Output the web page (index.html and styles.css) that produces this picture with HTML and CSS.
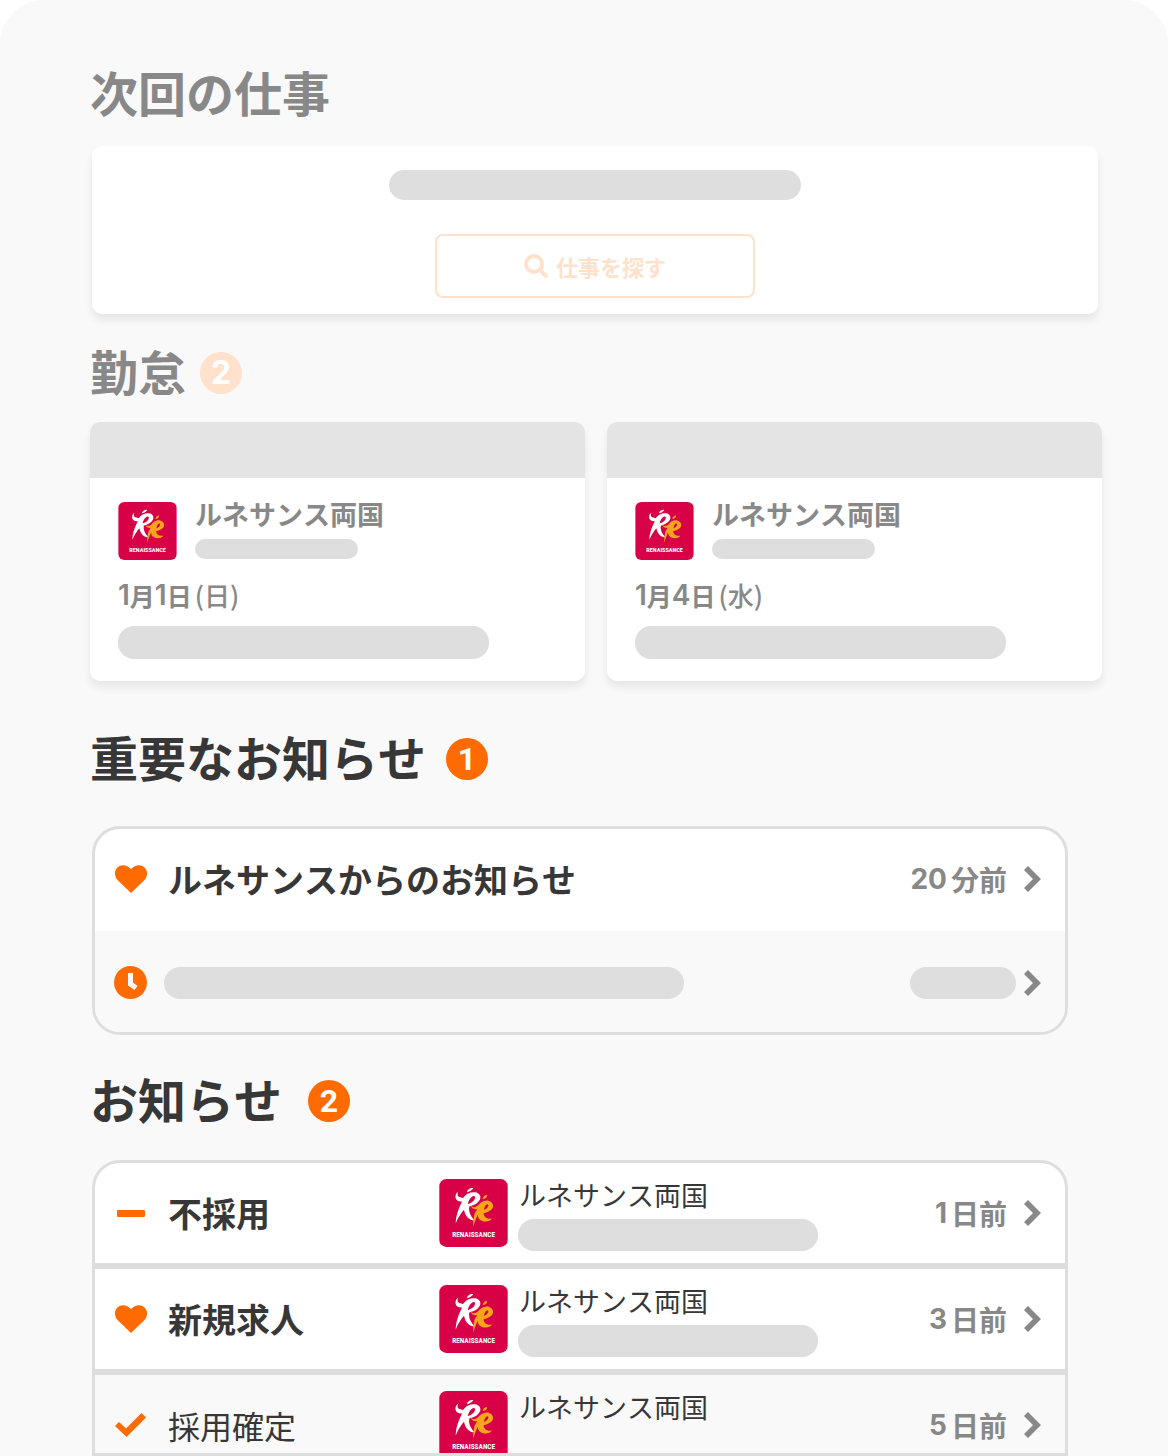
FILE: index.html
```html
<!DOCTYPE html>
<html lang="ja">
<head>
<meta charset="utf-8">
<meta name="viewport" content="width=device-width, initial-scale=1">
<title>次回の仕事</title>
<link rel="stylesheet" href="styles.css">
</head>
<body>
<svg class="sprite" aria-hidden="true">
  <symbol id="logo" viewBox="0 0 207 205">
    <rect width="207" height="205" rx="22" fill="#d80046"/>
    <path fill="#fff" d="M83 40C87 30 95 26 103 28C99 33 94 38 84 40Z"/>
    <path fill="#fff" d="M58 38C53 46 55 54 64 55L72 57C82 44 94 39 108 40C122 42 127 52 123 62C118 72 107 79 97 81L91 83C88 95 93 111 107 125C91 125 78 113 75 93C69 99 58 115 50 134C50 115 56 94 69 68C58 69 50 64 49 55C49 47 52 41 58 38ZM88 69L86 75C96 73 107 65 108 57C109 50 103 50 98 54C93 58 90 64 88 69Z"/>
    <path fill="#f8a51b" d="M131 60C132 53 138 48 145 48C144 56 139 60 131 60Z"/>
    <path fill="#f8a51b" d="M94 78C99 86 107 87 116 81C124 69 138 62 151 66C164 71 166 84 157 93C150 99 142 102 134 103C135 114 143 122 160 119C152 130 132 131 121 121C118 118 116 112 116 107C113 116 107 128 103 143C102 132 103 119 107 103C110 98 113 96 114 91C106 93 97 89 94 78ZM135 93C143 91 149 84 148 78C145 73 137 80 135 93Z"/>
  </symbol>
  <symbol id="heart" viewBox="0 0 32 28">
    <path d="M16 28L3 15.500C-1 11.500-1 5.500 2.500 2.500C6-1 12-.5 16 4C20-.5 26-1 29.500 2.500C33 5.500 33 11.500 29 15.500Z"/>
  </symbol>
  <symbol id="clock" viewBox="0 0 33 33">
    <path fill-rule="evenodd" d="M16.500 0A16.500 16.500 0 1 1 16.500 33A16.500 16.500 0 1 1 16.500 0ZM14 7V19.500L20.500 24L23.500 20L19 16.500V7Z"/>
  </symbol>
  <symbol id="minus" viewBox="0 0 28 7"><rect width="28" height="7" rx="1"/></symbol>
  <symbol id="check" viewBox="0 0 31 24">
    <path d="M0 13L4 9L11 15.500L26.500 0L31 4.500L11.500 24Z"/>
  </symbol>
  <symbol id="chevron" viewBox="0 0 17 26">
    <path d="M4 0L17 13L4 26L0 22L9 13L0 4Z"/>
  </symbol>
  <symbol id="search" viewBox="0 0 24 24">
    <path d="M16 16L22 22M10 2A8 8 0 1 1 10 18A8 8 0 1 1 10 2Z" fill="none" stroke="currentColor" stroke-width="4" stroke-linecap="round"/>
  </symbol>
</svg>

<main class="panel">
  <section>
    <h2 class="heading heading--muted">次回の仕事</h2>
    <div class="next-job">
      <div class="bar bar--message"></div>
      <button class="search-button" type="button"><svg width="24" height="24" aria-hidden="true"><use href="#search"/></svg>仕事を探す</button>
    </div>
  </section>

  <section class="section--attendance">
    <h2 class="heading heading--muted">勤怠<span class="badge badge--muted">2</span></h2>
    <div class="shifts">
      <article class="shift">
        <div class="shift__header"></div>
        <div class="shift__body">
          <div class="shift__place">
            <svg class="shift__logo" viewBox="0 0 207 205"><use href="#logo"/><text x="104" y="175" text-anchor="middle" class="logo-text">RENAISSANCE</text></svg>
            <div class="shift__label">
              <div class="shift__name">ルネサンス両国</div>
              <div class="bar bar--address"></div>
            </div>
          </div>
          <div class="date"><span class="date__digit">1</span><span>月</span><span class="date__digit">1</span><span>日</span><span class="date__weekday">(日)</span></div>
          <div class="bar bar--hours"></div>
        </div>
      </article>
      <article class="shift">
        <div class="shift__header"></div>
        <div class="shift__body">
          <div class="shift__place">
            <svg class="shift__logo" viewBox="0 0 207 205"><use href="#logo"/><text x="104" y="175" text-anchor="middle" class="logo-text">RENAISSANCE</text></svg>
            <div class="shift__label">
              <div class="shift__name">ルネサンス両国</div>
              <div class="bar bar--address"></div>
            </div>
          </div>
          <div class="date"><span class="date__digit">1</span><span>月</span><span class="date__digit">4</span><span>日</span><span class="date__weekday">(水)</span></div>
          <div class="bar bar--hours"></div>
        </div>
      </article>
    </div>
  </section>

  <section class="section--important">
    <h2 class="heading heading--important">重要なお知らせ<span class="badge">1</span></h2>
    <div class="list">
      <a class="row" href="#">
        <span class="row__icon"><svg width="32" height="28" aria-hidden="true"><use href="#heart"/></svg></span>
        <span class="row__title row__title--wide">ルネサンスからのお知らせ</span>
        <span class="time"><span class="time__digit">20</span>分前</span>
        <svg class="chevron" aria-hidden="true"><use href="#chevron"/></svg>
      </a>
      <a class="row row--read" href="#">
        <span class="row__icon"><svg width="33" height="33" aria-hidden="true"><use href="#clock"/></svg></span>
        <span class="bar bar--title"></span>
        <span class="bar bar--time"></span>
        <svg class="chevron" aria-hidden="true"><use href="#chevron"/></svg>
      </a>
    </div>
  </section>

  <section class="section--news">
    <h2 class="heading heading--news">お知らせ<span class="badge">2</span></h2>
    <div class="list list--divided">
      <a class="row" href="#">
        <span class="row__icon"><svg width="28" height="7" aria-hidden="true"><use href="#minus"/></svg></span>
        <span class="row__title">不採用</span>
        <span class="place">
          <svg class="place__logo" viewBox="0 0 207 205"><use href="#logo"/><text x="104" y="175" text-anchor="middle" class="logo-text">RENAISSANCE</text></svg>
          <span class="place__label"><span class="place__name">ルネサンス両国</span><span class="bar bar--place"></span></span>
        </span>
        <span class="time"><span class="time__digit">1</span>日前</span>
        <svg class="chevron" aria-hidden="true"><use href="#chevron"/></svg>
      </a>
      <a class="row" href="#">
        <span class="row__icon"><svg width="32" height="28" aria-hidden="true"><use href="#heart"/></svg></span>
        <span class="row__title">新規求人</span>
        <span class="place">
          <svg class="place__logo" viewBox="0 0 207 205"><use href="#logo"/><text x="104" y="175" text-anchor="middle" class="logo-text">RENAISSANCE</text></svg>
          <span class="place__label"><span class="place__name">ルネサンス両国</span><span class="bar bar--place"></span></span>
        </span>
        <span class="time"><span class="time__digit">3</span>日前</span>
        <svg class="chevron" aria-hidden="true"><use href="#chevron"/></svg>
      </a>
      <a class="row row--read row--cut" href="#">
        <span class="row__icon"><svg width="31" height="24" aria-hidden="true"><use href="#check"/></svg></span>
        <span class="row__title">採用確定</span>
        <span class="place">
          <svg class="place__logo" viewBox="0 0 207 205"><use href="#logo"/><text x="104" y="175" text-anchor="middle" class="logo-text">RENAISSANCE</text></svg>
          <span class="place__label"><span class="place__name">ルネサンス両国</span></span>
        </span>
        <span class="time"><span class="time__digit">5</span>日前</span>
        <svg class="chevron" aria-hidden="true"><use href="#chevron"/></svg>
      </a>
    </div>
  </section>
</main>
</body>
</html>
```

FILE: styles.css
```css
:root {
  --ink: #373737;
  --muted: #888;
  --line: #dedede;
  --surface: #f9f9f9;
  --accent: #ff6b00;
  --accent-muted: #ffe1cc;
}

* {
  box-sizing: border-box;
}

body {
  margin: 0;
  background: #fff;
  color: var(--ink);
  font-family: "Noto Sans CJK JP", sans-serif;
  font-kerning: none;
}

svg {
  display: block;
  flex: none;
  fill: currentColor;
}

.sprite {
  position: absolute;
  width: 0;
  height: 0;
}

.logo-text {
  fill: #fff;
  font: 700 22px "Roboto Condensed", "Liberation Sans Narrow", "Open Sans Condensed", sans-serif;
}

.panel {
  padding: 67px 66px 0 90px;
  background: var(--surface);
  border-radius: 44px 44px 0 0;
}

.section--attendance {
  margin-top: 32px;
}

.section--important {
  margin-top: 51px;
}

.section--news {
  margin-top: 39px;
}

.heading {
  display: flex;
  align-items: flex-end;
  gap: 14px;
  margin: 0;
  font-size: 48px;
  font-weight: 700;
  line-height: 48px;
}

.heading--muted {
  color: var(--muted);
}

.heading--important {
  gap: 20px;
}

.heading--news {
  gap: 26px;
}

.badge {
  display: flex;
  align-items: center;
  justify-content: center;
  width: 42px;
  height: 42px;
  border-radius: 50%;
  background: var(--accent);
  color: #fff;
  font-family: Roboto, sans-serif;
  font-size: 32px;
  font-weight: 700;
}

.badge--muted {
  background: var(--accent-muted);
  font-family: Inter, sans-serif;
}

.bar {
  display: block;
  height: 32px;
  border-radius: 16px;
  background: var(--line);
}

.next-job {
  display: flex;
  flex-direction: column;
  align-items: center;
  gap: 34px;
  margin: 31px 4px 0 2px;
  padding: 24px 24px 16px;
  border-radius: 10px;
  background: #fff;
  box-shadow: 0 6px 8px rgba(0, 0, 0, 0.08);
}

.bar--message {
  width: 412px;
  height: 30px;
}

.search-button {
  display: flex;
  align-items: center;
  justify-content: center;
  gap: 8px;
  width: 320px;
  height: 64px;
  padding: 0;
  border: 2px solid var(--accent-muted);
  border-radius: 8px;
  background: #fff;
  color: var(--accent-muted);
  font: 700 22px "Noto Sans CJK JP", sans-serif;
}

.shifts {
  display: grid;
  grid-template-columns: 1fr 1fr;
  gap: 22px;
  margin-top: 28px;
}

.shift {
  overflow: hidden;
  border-radius: 10px;
  background: #fff;
  box-shadow: 0 6px 8px rgba(0, 0, 0, 0.08);
  color: var(--muted);
}

.shift__header {
  height: 56px;
  background: #e4e4e4;
}

.shift__body {
  padding: 24px 28px 22px;
}

.shift__place {
  display: flex;
  gap: 18px;
}

.shift__logo {
  width: 59px;
  height: 58px;
}

.shift__name {
  margin-bottom: 13px;
  font-size: 27px;
  font-weight: 700;
  line-height: 24px;
}

.bar--address {
  width: 163px;
  height: 20px;
}

.date {
  display: flex;
  align-items: center;
  margin: 20px 0 16px;
  font-size: 25px;
  font-weight: 700;
  line-height: 30px;
}

.date__digit {
  font-family: Inter, sans-serif;
  font-size: 28px;
  font-weight: 600;
}

.date__weekday {
  margin-left: 3px;
  font-size: 26px;
  font-weight: 500;
}

.bar--hours {
  width: 371px;
  height: 33px;
}

.list {
  margin: 46px 34px 0 2px;
  overflow: hidden;
  border: 3px solid var(--line);
  border-radius: 28px;
  background: #fff;
}

.list--divided {
  margin-top: 38px;
  border-radius: 28px 28px 0 0;
}

.row {
  display: flex;
  align-items: center;
  gap: 17px;
  height: 102px;
  padding: 0 24px 2px 19px;
  color: inherit;
  text-decoration: none;
}

.row--read {
  height: 101px;
  padding-top: 4px;
  background: var(--surface);
}

.list--divided .row {
  height: 106px;
  padding-top: 0;
  padding-bottom: 0;
  border-bottom: 6px solid var(--line);
}

.row__icon {
  display: flex;
  flex: none;
  justify-content: center;
  width: 33px;
  color: var(--accent);
}

.row__title {
  flex: 0 0 258px;
  padding-left: 4px;
  font-size: 34px;
  font-weight: 700;
  line-height: 40px;
}

.row__title--wide {
  flex: 1;
}

.row--read .row__title {
  font-size: 32px;
  font-weight: 400;
}

.bar--title {
  width: 520px;
}

.bar--time {
  width: 106px;
  margin-left: auto;
}

.time {
  display: flex;
  align-items: center;
  gap: 4px;
  margin-left: auto;
  color: var(--muted);
  font-size: 28px;
  font-weight: 700;
  line-height: 28px;
}

.time__digit {
  font-family: Inter, sans-serif;
}

.chevron {
  width: 17px;
  height: 26px;
  color: var(--muted);
}

.bar--time + .chevron {
  margin-left: -9px;
}

.place {
  display: flex;
  align-self: flex-start;
  gap: 10px;
  margin-top: 16px;
}

.place__logo {
  width: 69px;
  height: 68px;
}

.place__name {
  display: block;
  padding-left: 1px;
  font-size: 27px;
  line-height: 32px;
}

.bar--place {
  width: 300px;
  margin-top: 8px;
}

/* The last row is cut off by the end of the panel. */
.list--divided .row--cut {
  display: grid;
  grid-template-columns: 33px 258px auto 1fr auto;
  grid-template-rows: 100px;
  height: 78px;
  overflow: hidden;
  border-bottom: 0;
}
```
